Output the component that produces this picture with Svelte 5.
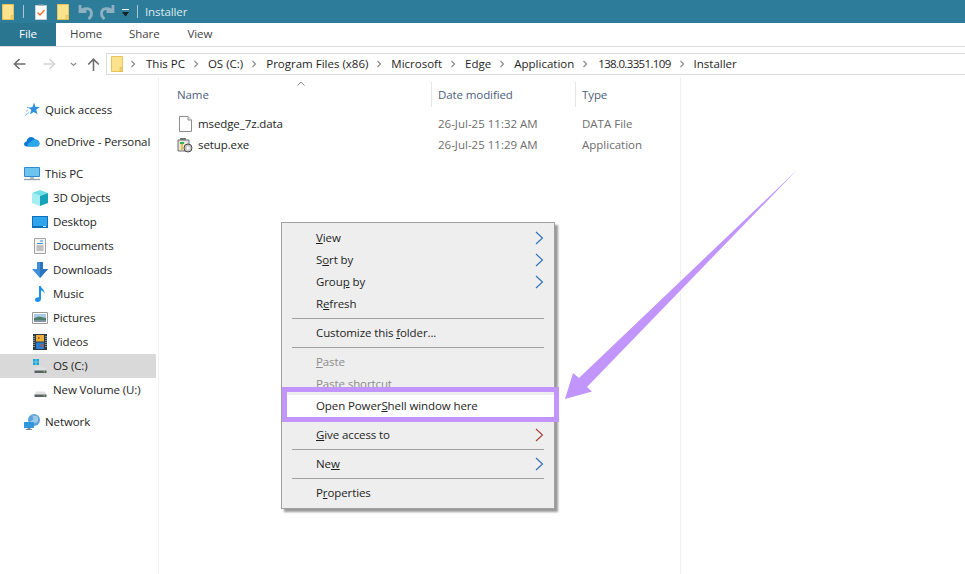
<script>
  // Columns of the details view
  const files = [
    { name: 'msedge_7z.data', date: '26-Jul-25 11:32 AM', type: 'DATA File', icon: 'doc' },
    { name: 'setup.exe', date: '26-Jul-25 11:29 AM', type: 'Application', icon: 'exe' }
  ];

  const crumbs = ['This PC', 'OS (C:)', 'Program Files (x86)', 'Microsoft', 'Edge', 'Application', '138.0.3351.109', 'Installer'];
</script>

{#snippet folder(w, h)}
  <svg width={w} height={h} viewBox="0 0 12 16">
    <path d="M.5.5h11v15H.5z" fill="#fbe38e" stroke="#e6c35c" />
    <path d="M9 11.500h2.500v4H9z" fill="#f4cf6a" stroke="#dcb94f" stroke-width=".6" />
  </svg>
{/snippet}

{#snippet chevron()}
  <svg class="crumb-sep" width="6" height="8" viewBox="0 0 6 8"><path d="M1.500 1l3 3-3 3" fill="none" stroke="#8a8a8a" stroke-width="1.200" /></svg>
{/snippet}

{#snippet drive()}
  <path d="M3 8.500h9l1.500 3h-12z" fill="#dfe1e2" />
  <path d="M1.500 11.500h12v2.500h-12z" fill="#5b6062" />
  <path d="M10.500 12.200h1.500v1h-1.500z" fill="#5fe06a" />
{/snippet}

<div class="window">
  <div class="titlebar">
    <span class="qat-folder">{@render folder(12, 16)}</span>
    <span class="qat-line"></span>
    <svg class="qat-check" width="12" height="16" viewBox="0 0 12 16">
      <path d="M.5 1.500h11v14H.5z" fill="#fdfdfd" stroke="#c5d2d8" />
      <path d="M3.500.5h5v1.500h-5z" fill="#9fb0b8" />
      <path d="M2.500 8.500l2.500 2.500 4.500-5" fill="none" stroke="#ef6c2c" stroke-width="1.300" />
    </svg>
    <span class="qat-folder2">{@render folder(12, 16)}</span>
    <svg class="qat-undo" width="15" height="16" viewBox="0 0 15 16">
      <path d="M2 1v6.500h6.500M2.500 7.500C5 3.500 13.500 3 13.500 9.500c0 2.500-1.200 4-3 5.500" fill="none" stroke="#8db1c1" stroke-width="2.800" />
    </svg>
    <svg class="qat-redo" width="15" height="16" viewBox="0 0 15 16">
      <path d="M13 1v6.500H6.500M12.500 7.500C10 3.500 1.500 3 1.500 9.500c0 2.500 1.200 4 3 5.500" fill="none" stroke="#8db1c1" stroke-width="2.800" />
    </svg>
    <svg class="qat-down" width="9" height="8" viewBox="0 0 9 8">
      <path d="M1 .5h7" stroke="#fff" fill="none" />
      <path d="M1 3h7L4.500 7.500z" fill="#10222a" />
    </svg>
    <span class="qat-line second"></span>
    <span class="title">Installer</span>
  </div>

  <div class="tabs">
    <div class="tab-file">File</div>
    <div class="tab home">Home</div>
    <div class="tab share">Share</div>
    <div class="tab view">View</div>
  </div>

  <div class="navbar">
    <svg class="nav-back" width="13" height="12" viewBox="0 0 13 12"><path d="M12.500 6H1.500M6.500 1l-5 5 5 5" fill="none" stroke="#6d6d6d" stroke-width="1.600" /></svg>
    <svg class="nav-forward" width="13" height="12" viewBox="0 0 13 12"><path d="M.5 6h11M6.500 1l5 5-5 5" fill="none" stroke="#d4d4d4" stroke-width="1.600" /></svg>
    <svg class="nav-recent" width="7" height="5" viewBox="0 0 7 5"><path d="M.8.8L3.500 3.500 6.200.8" fill="none" stroke="#8a8a8a" stroke-width="1.200" /></svg>
    <svg class="nav-up" width="13" height="13" viewBox="0 0 13 13"><path d="M6.500 13V1.500M1.200 6.500l5.300-5.300 5.300 5.300" fill="none" stroke="#6d6d6d" stroke-width="1.600" /></svg>
    <div class="address">
      <span class="addr-folder">{@render folder(12, 16)}</span>
      {#each crumbs as crumb}
        {@render chevron()}
        <span class="crumb" class:num={/^\d/.test(crumb)}>{crumb}</span>
      {/each}
    </div>
  </div>

  <div class="main">
    <nav class="sidebar">
      <div class="row top">
        <span class="ico"><svg width="15" height="15" viewBox="0 0 15 15"><path d="M9 .5l1.300 4.300 4.500.2-3.600 2.700 1.300 4.500L8.700 9.900 5 12.500l1.400-4.400L3.500 5.800 7.500 5z" fill="#2f8fe0" /><path d="M0 13.500l4-3M1 9.500l2-1.500M2 5.500h2" stroke="#7fbdf0" /></svg></span>
        <span>Quick access</span>
      </div>
      <div class="row top gap">
        <span class="ico"><svg width="16" height="11" viewBox="0 0 16 11"><path d="M3 10.500C.8 10.500 0 9 0 8s1-2.500 2.500-2.500C3 2.500 5 1 7 1c2 0 3.500 1 4 2.500 2.500 0 4.500 1.500 4.500 4 0 1.500-1 3-2.500 3z" fill="#0f78d4" /><path d="M4 10.500C3 9 4 6.800 6 6.500 7 4.500 10 3.500 11 3.500c2.500 0 4.500 1.500 4.500 4 0 1.500-1 3-2.500 3z" fill="#28a8ea" /></svg></span>
        <span>OneDrive - Personal</span>
      </div>
      <div class="row top gap">
        <span class="ico"><svg width="16" height="14" viewBox="0 0 16 14"><path d="M.5.5h15v9H.5z" fill="#6cc3ee" stroke="#2d8ccc" /><path d="M6 10h4v2H6z" fill="#b4bcc2" /><path d="M0 12.500h16" stroke="#9aa3a8" stroke-width="1.400" /></svg></span>
        <span>This PC</span>
      </div>
      <div class="row sub">
        <span class="ico"><svg width="16" height="16" viewBox="0 0 16 16"><path d="M8 0l8 3-8 3-8-3z" fill="#6fdfe6" /><path d="M0 3l8 3v10L0 13z" fill="#a4edf0" /><path d="M16 3L8 6v10l8-3z" fill="#15a3b8" /></svg></span>
        <span>3D Objects</span>
      </div>
      <div class="row sub">
        <span class="ico"><svg width="16" height="12" viewBox="0 0 16 12"><path d="M0 0h16v12H0z" fill="#0c6fbe" /><path d="M1 1h14v9H1z" fill="#2fa3ec" /><path d="M11 10.500h3" stroke="#dff" stroke-width=".8" /></svg></span>
        <span>Desktop</span>
      </div>
      <div class="row sub">
        <span class="ico"><svg width="12" height="16" viewBox="0 0 12 16"><path d="M.5.500h11v15H.5z" fill="#f5f5f5" stroke="#a2a2a2" /><path d="M6 3h3M3 5.500h6" stroke="#3d8fd6" stroke-width="1.200" /><path d="M2.500 8h7M2.500 10h7M2.500 12h7" stroke="#8a8a8a" /></svg></span>
        <span>Documents</span>
      </div>
      <div class="row sub">
        <span class="ico"><svg width="16" height="16" viewBox="0 0 16 16"><path d="M5 0h6v7h5l-8 9-8-9h5z" fill="#3f8fdc" /><path d="M8 0h3v7h5l-8 9z" fill="#2c74bd" /></svg></span>
        <span>Downloads</span>
      </div>
      <div class="row sub">
        <span class="ico"><svg width="12" height="16" viewBox="0 0 12 16"><path d="M5 0h1.800c.4 2.500 4.200 3.500 3.700 7.500C9.800 5.500 8.500 4.700 7 4.500V13c0 1.800-1.600 3-3.500 3S1 15 1 13.500 2.800 11 5 11.200z" fill="#1e90e8" /></svg></span>
        <span>Music</span>
      </div>
      <div class="row sub">
        <span class="ico"><svg width="16" height="12" viewBox="0 0 16 12"><path d="M.5.500h15v11H.5z" fill="#fff" stroke="#9a9a9a" /><path d="M2 2h12v4H2z" fill="#a9cde6" /><path d="M2 6l5-1.500L14 6v2H2z" fill="#4f7f6a" /><path d="M2 8h12v2H2z" fill="#7f95a0" /></svg></span>
        <span>Pictures</span>
      </div>
      <div class="row sub">
        <span class="ico"><svg width="14" height="16" viewBox="0 0 14 16"><path d="M0 0h14v16H0z" fill="#2e3a44" /><path d="M3 1h8v6.500H3z" fill="#e9b13c" /><path d="M3 8.500h8V15H3z" fill="#2a7fd0" /><path d="M5 3h1.500v2H5zM8 10h2v3H8z" fill="#d04a30" /><path d="M1 2v12M13 2v12" stroke="#dfe6ea" stroke-dasharray="1 1" /></svg></span>
        <span>Videos</span>
      </div>
      <div class="row sub selected">
        <span class="ico"><svg width="15" height="14" viewBox="0 0 15 14"><path d="M0 0h2.700v2.700H0zM3.300 0H6v2.700H3.300zM0 3.300h2.700V6H0zM3.300 3.300H6V6H3.300z" fill="#18a8e0" />{@render drive()}</svg></span>
        <span>OS (C:)</span>
      </div>
      <div class="row sub">
        <span class="ico"><svg width="15" height="14" viewBox="0 0 15 14">{@render drive()}</svg></span>
        <span>New Volume (U:)</span>
      </div>
      <div class="row top gap">
        <span class="ico"><svg width="16" height="16" viewBox="0 0 16 16"><circle cx="10" cy="6" r="6" fill="#5ba3d8" /><path d="M7 1.500c2 1 3 2.500 2 4s-3 1-3 3l6 .5c2-1 3-4 1-7z" fill="#9fcbe8" /><path d="M0 8h10v6H0z" fill="#2f97dc" /><path d="M3.500 14h3v1h-3zM2 15h6v1H2z" fill="#7d8a92" /></svg></span>
        <span>Network</span>
      </div>
    </nav>

    <section class="list">
      <svg class="sort-caret" width="8" height="5" viewBox="0 0 8 5"><path d="M.5 4.500L4 1l3.500 3.500" fill="none" stroke="#8a8a8a" /></svg>
      <div class="head">
        <div class="col-name">Name</div>
        <div class="col-date">Date modified</div>
        <div class="col-type">Type</div>
      </div>
      {#each files as f}
        <div class="file">
          <div class="col-name file-name">
            <span class="file-ico">
              {#if f.icon === 'doc'}
                <svg width="13" height="16" viewBox="0 0 13 16"><path d="M.5.500h8.500l3.500 3.500v11.500H.5z" fill="#fff" stroke="#8e8e8e" /><path d="M9 .5V4h3.500" fill="#eee" stroke="#8e8e8e" /></svg>
              {:else}
                <svg width="16" height="16" viewBox="0 0 16 16"><path d="M1 3h11v11H1z" fill="#e4e4e4" stroke="#6e6e6e" /><path d="M3 1h6v2H3z" fill="#6e7a70" /><path d="M3 5h4v2H3z" fill="#36b44a" /><path d="M4 7h2v6H4z" fill="#e6c43a" /><circle cx="11" cy="11" r="4" fill="#c9c9c9" stroke="#4a4a4a" /><path d="M10 9l3 2-3 2z" fill="#fff" /></svg>
              {/if}
            </span>
            <span>{f.name}</span>
          </div>
          <div class="col-date dim">{f.date}</div>
          <div class="col-type dim">{f.type}</div>
        </div>
      {/each}
    </section>
  </div>

  <div class="menu">
    <div class="item"><span><u>V</u>iew</span><svg width="9" height="14" viewBox="0 0 9 14"><path d="M1 1l6.500 6L1 13" fill="none" stroke="#2a6fb8" stroke-width="1.100" /></svg></div>
    <div class="item"><span>S<u>o</u>rt by</span><svg width="9" height="14" viewBox="0 0 9 14"><path d="M1 1l6.500 6L1 13" fill="none" stroke="#2a6fb8" stroke-width="1.100" /></svg></div>
    <div class="item"><span>Grou<u>p</u> by</span><svg width="9" height="14" viewBox="0 0 9 14"><path d="M1 1l6.500 6L1 13" fill="none" stroke="#2a6fb8" stroke-width="1.100" /></svg></div>
    <div class="item"><span>R<u>e</u>fresh</span></div>
    <div class="sep"></div>
    <div class="item"><span>Customize this <u>f</u>older...</span></div>
    <div class="sep"></div>
    <div class="item off"><span><u>P</u>aste</span></div>
    <div class="item off"><span>Paste <u>s</u>hortcut</span></div>
    <div class="item hot"><span>Open Power<u>S</u>hell window here</span></div>
    <div class="sep"></div>
    <div class="item"><span><u>G</u>ive access to</span><svg width="9" height="14" viewBox="0 0 9 14"><path d="M1 1l6.500 6L1 13" fill="none" stroke="#a8413a" stroke-width="1.100" /></svg></div>
    <div class="sep"></div>
    <div class="item"><span>Ne<u>w</u></span><svg width="9" height="14" viewBox="0 0 9 14"><path d="M1 1l6.500 6L1 13" fill="none" stroke="#2a6fb8" stroke-width="1.100" /></svg></div>
    <div class="sep"></div>
    <div class="item"><span>P<u>r</u>operties</span></div>
  </div>

  <!-- annotation drawn over the screenshot -->
  <div class="callout"></div>
  <svg class="arrow" width="965" height="574" viewBox="0 0 965 574">
    <path d="M797 170L587 387l5 4.500L565 399l8-26 6 5z" fill="#c195fb" />
  </svg>
</div>

<style>
  :global(body) {
    margin: 0;
    background: #fff;
  }

  .window {
    position: relative;
    width: 965px;
    height: 574px;
    overflow: hidden;
    background: #fff;
    color: #1e1e1e;
    font-family: "Open Sans", "Noto Sans", sans-serif;
    font-size: 11.5px;
    letter-spacing: -0.1px;
  }

  svg {
    display: block;
    flex: none;
  }

  .titlebar {
    display: flex;
    align-items: center;
    height: 23px;
    background: #2d7d9a;
  }

  .qat-folder {
    margin-left: 2px;
  }

  .qat-line {
    width: 1px;
    height: 13px;
    margin-left: 9px;
    background: #a9c8d4;
  }

  .qat-line.second {
    margin-left: 7px;
  }

  .qat-check {
    margin-left: 11px;
  }

  .qat-folder2 {
    margin-left: 10px;
  }

  .qat-undo {
    margin-left: 9px;
  }

  .qat-redo {
    margin-left: 7px;
  }

  .qat-down {
    margin-left: 6px;
    margin-top: 3px;
  }

  .title {
    margin-left: 7px;
    padding-bottom: 1px;
    color: #dceaef;
  }

  .tabs {
    display: flex;
    height: 23px;
    border-bottom: 1px solid #dadbdc;
    color: #444;
  }

  .tab-file {
    width: 56px;
    line-height: 22px;
    text-align: center;
    background: #2a7590;
    color: #fff;
  }

  .tab {
    line-height: 22px;
  }

  .home {
    margin-left: 14px;
  }

  .share {
    margin-left: 27px;
  }

  .view {
    margin-left: 28px;
  }

  .navbar {
    display: flex;
    align-items: center;
    height: 22px;
    margin-top: 6px;
  }

  .nav-back {
    margin-left: 13px;
  }

  .nav-forward {
    margin-left: 17px;
  }

  .nav-recent {
    margin-left: 14px;
  }

  .nav-up {
    margin-left: 10px;
  }

  .address {
    flex: 1;
    display: flex;
    align-items: center;
    height: 20px;
    margin-left: 6px;
    border: 1px solid #dadbdc;
    border-right: none;
  }

  .addr-folder {
    margin-left: 4px;
  }

  .crumb {
    padding-bottom: 1px;
    letter-spacing: 0;
  }

  .crumb.num {
    margin-left: 1px;
    letter-spacing: -0.65px;
  }

  .crumb-sep {
    margin: 0 9px 0 8px;
  }

  .addr-folder + .crumb-sep {
    margin-left: 7px;
    margin-right: 10px;
  }

  .main {
    display: flex;
    height: 497px;
    margin-top: 2px;
  }

  .sidebar {
    width: 158px;
    padding-top: 21px;
    border-right: 1px solid #f0f0f0;
  }

  .row {
    display: flex;
    align-items: center;
    height: 24px;
    width: 156px;
    padding-bottom: 1px;
    box-sizing: border-box;
    white-space: nowrap;
  }

  .ico {
    display: flex;
    justify-content: center;
    width: 16px;
    margin-right: 5px;
  }

  .row.top {
    padding-left: 24px;
  }

  .row.sub {
    padding-left: 32px;
  }

  .row.gap {
    margin-top: 8px;
  }

  .row.selected {
    background: #d9d9d9;
  }

  .list {
    position: relative;
    width: 521px;
    border-right: 1px solid #f0f0f0;
  }

  .sort-caret {
    position: absolute;
    left: 138px;
    top: 4px;
  }

  .head {
    display: flex;
    height: 25px;
    margin-top: 5px;
    margin-bottom: 6px;
    color: #4c607a;
    line-height: 25px;
  }

  .col-name {
    width: 272px;
    padding-left: 18px;
    box-sizing: border-box;
  }

  .col-date {
    width: 144px;
    padding-left: 6px;
    box-sizing: border-box;
  }

  .head .col-date,
  .head .col-type {
    border-left: 1px solid #e5e5e5;
  }

  .col-type {
    padding-left: 6px;
  }

  .file {
    display: flex;
    height: 21px;
    line-height: 21px;
  }

  .file .col-date,
  .file .col-type {
    padding-left: 7px;
  }

  .file-name {
    display: flex;
    align-items: center;
    gap: 5px;
    padding-left: 18px;
  }

  .file-ico {
    display: flex;
    justify-content: center;
    width: 16px;
  }

  .dim {
    color: #6d6d6d;
    letter-spacing: 0;
  }

  .menu {
    position: absolute;
    left: 281px;
    top: 222px;
    width: 272px;
    padding: 4px 0;
    background: #eee;
    border: 1px solid #a0a0a0;
    box-shadow: 3px 3px 2px rgba(0, 0, 0, 0.4);
  }

  .item {
    display: flex;
    align-items: center;
    justify-content: space-between;
    height: 22px;
    padding: 0 10px 1px 34px;
    box-sizing: border-box;
  }

  .item.off {
    color: #8c8c8c;
  }

  .item.hot {
    background: #fff;
  }

  .sep {
    height: 1px;
    margin: 3px 10px;
    background: #a0a0a0;
  }

  .callout {
    position: absolute;
    left: 282px;
    top: 387px;
    width: 267px;
    height: 25px;
    border: 5px solid #c195fb;
  }

  .arrow {
    position: absolute;
    left: 0;
    top: 0;
  }
</style>
